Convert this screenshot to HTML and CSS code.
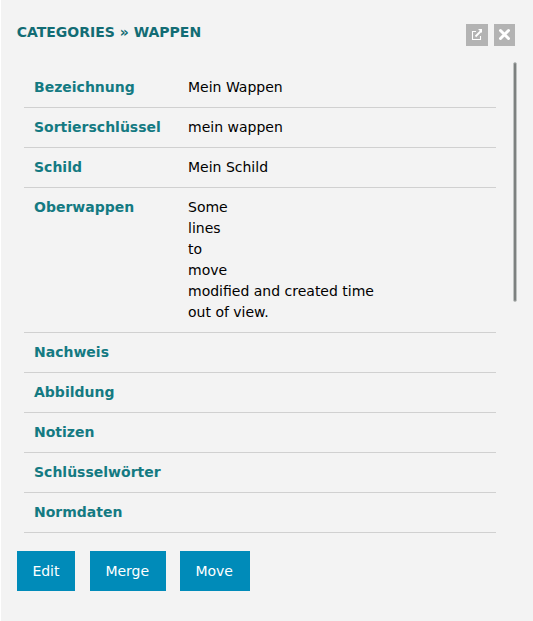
FILE: index.html
```html
<!DOCTYPE html>
<html lang="de">
<head>
<meta charset="utf-8">
<title>Categories » Wappen</title>
<link rel="stylesheet" href="styles.css">
</head>
<body>
<main class="panel">
  <header class="header">
    <h1 class="title">CATEGORIES » WAPPEN</h1>
    <div class="tools">
      <button class="tool tool-open" aria-label="Open"><svg width="22" height="22" viewBox="0 0 22 22"><path d="M10 7.500H6.500V15.500H14.500V12" fill="none" stroke="#fff" stroke-width="1.100"/><path d="M9.500 12.500L15 7" stroke="#fff" stroke-width="1.800"/><path d="M12 5H16V9Z" fill="#fff"/></svg></button>
      <button class="tool tool-close" aria-label="Close"><svg width="21" height="22" viewBox="0 0 21 22"><path d="M6.500 6.500L14.500 14.500M14.500 6.500L6.500 14.500" stroke="#fff" stroke-width="3" stroke-linecap="round"/></svg></button>
    </div>
  </header>
  <div class="content">
    <dl class="fields">
      <div class="row"><dt>Bezeichnung</dt><dd>Mein Wappen</dd></div>
      <div class="row"><dt>Sortierschlüssel</dt><dd>mein wappen</dd></div>
      <div class="row"><dt>Schild</dt><dd>Mein Schild</dd></div>
      <div class="row"><dt>Oberwappen</dt><dd>Some<br>lines<br>to<br>move<br>modified and created time<br>out of view.</dd></div>
      <div class="row"><dt>Nachweis</dt><dd></dd></div>
      <div class="row"><dt>Abbildung</dt><dd></dd></div>
      <div class="row"><dt>Notizen</dt><dd></dd></div>
      <div class="row"><dt>Schlüsselwörter</dt><dd></dd></div>
      <div class="row"><dt>Normdaten</dt><dd></dd></div>
    </dl>
    <div class="scrollbar"></div>
  </div>
  <footer class="actions">
    <button class="action edit">Edit</button>
    <button class="action merge">Merge</button>
    <button class="action move">Move</button>
  </footer>
</main>
</body>
</html>
```
FILE: styles.css
```css
* { box-sizing: border-box; }
body {
  margin: 0;
  background: #f3f3f3;
  font: 14px/21px "DejaVu Sans", sans-serif;
  color: #000;
}
.panel {
  height: 621px;
  border-left: 1px solid #fff;
  padding: 22px 16px 0;
}
.header {
  display: flex;
  justify-content: space-between;
  height: 40px;
}
.title {
  margin: 0 0 0 -0.3px;
  font-size: 14px;
  line-height: 21px;
  color: #126c74;
}
.tools {
  display: flex;
  gap: 6px;
  padding: 2px 2px 0 0;
}
.tool {
  width: 22px;
  height: 22px;
  padding: 0;
  border: 0;
  background: #b3b3b3;
}
.tool-close { width: 21px; }
.tool svg { display: block; }
.content {
  display: flex;
  justify-content: space-between;
  height: 489px;
}
.fields {
  width: 472px;
  margin: 6px 0 0 7px;
}
.row {
  display: grid;
  grid-template-columns: 154px 1fr;
  padding: 9px 10px;
  border-bottom: 1px solid #d0d0d0;
}
dt {
  font-weight: bold;
  color: #147a82;
}
dd { margin: 0; }
.scrollbar {
  width: 4px;
  height: 240px;
  border: 1px solid #bec1c0;
  border-radius: 2px;
  background: #7c807f;
}
.actions {
  display: flex;
}
.action {
  height: 40px;
  padding: 0 0 0 15.4px;
  border: 0;
  background: #008bb9;
  color: #fff;
  font: inherit;
  text-align: left;
}
.edit { width: 58px; }
.merge { width: 76px; margin: 0 14px 0 15px; }
.move { width: 70px; padding-left: 15.4px; }
```
